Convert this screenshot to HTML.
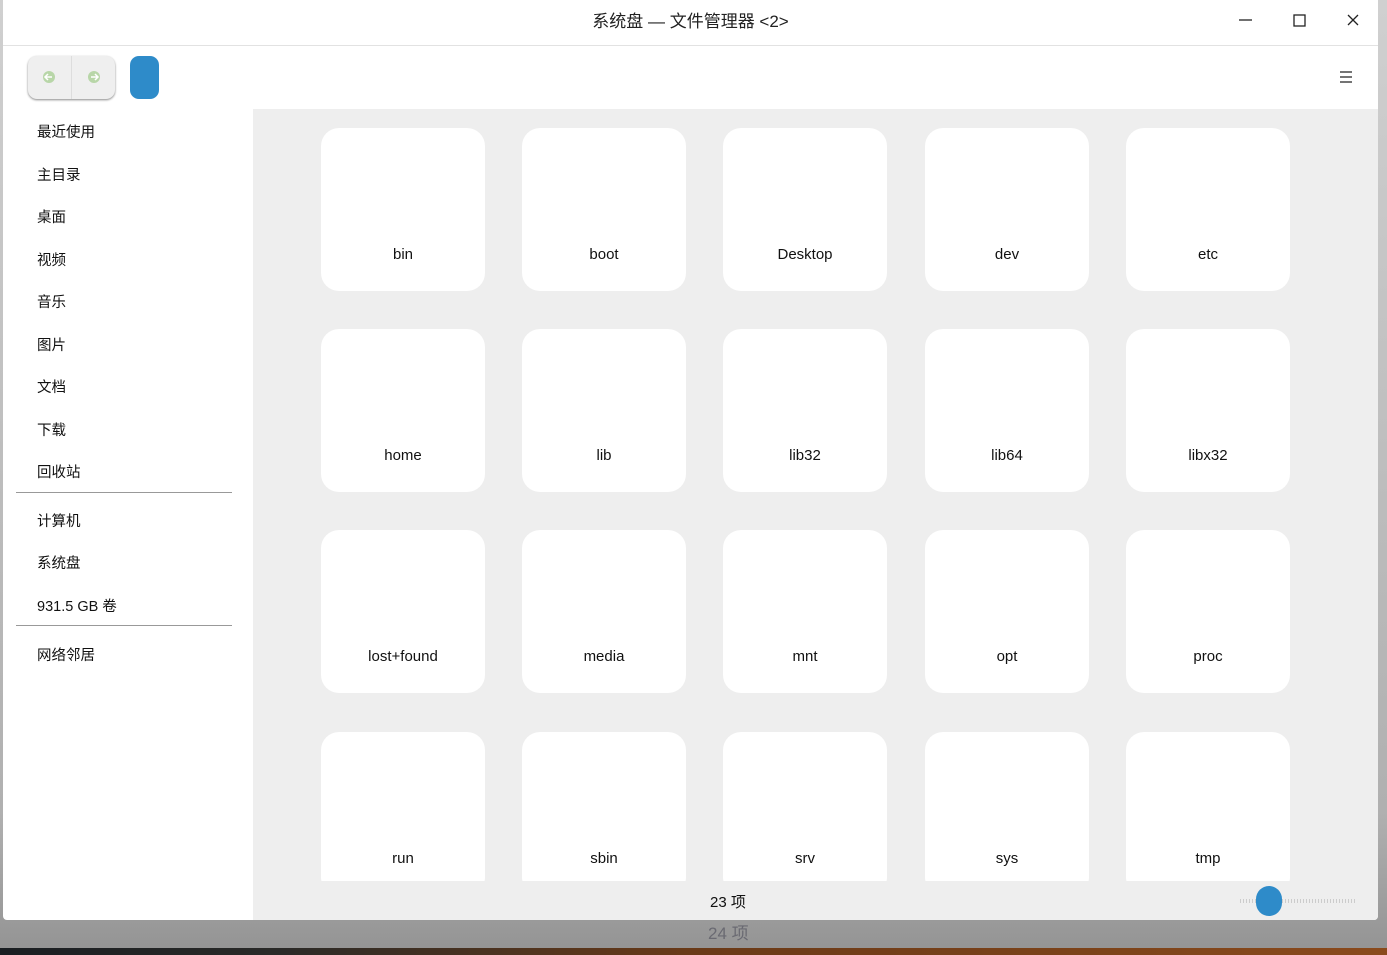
<!DOCTYPE html><html><head><meta charset="utf-8"><style>
*{margin:0;padding:0;box-sizing:border-box}
body{width:1387px;height:955px;overflow:hidden;background:linear-gradient(#d0d0d0,#b0b0b0 85%,#959595 99%);font-family:"Liberation Sans","Noto Sans CJK SC",sans-serif;position:relative}
.win{position:absolute;left:3px;top:0;width:1375px;height:920px;background:#fff;border-radius:0 0 4px 4px;overflow:hidden}
.title{position:absolute;top:0;left:0;right:0;height:46px;border-bottom:1px solid #e2e2e2;text-align:center;line-height:44px;font-size:17px;color:#222}
.side div{position:absolute;left:34px;font-size:14.5px;color:#111}
.sep{position:absolute;left:13px;width:216px;height:1px;background:#999}
.content{position:absolute;left:250px;top:109px;right:0;bottom:0;background:#eeeeee}
.tile{position:absolute;width:164px;height:163px;background:#fff;border-radius:18px;text-align:center;font-size:15px;color:#111;padding-top:118px}
</style></head><body>
<div style="position:absolute;left:0;top:948px;width:1387px;height:7px;background:linear-gradient(90deg,#1a1e22 0,#2a2a28 20%,#6a3a18 50%,#8a4a1c 100%)"></div>
<div class="win">
<div class="title">系统盘 — 文件管理器 &lt;2&gt;</div>
<svg style="position:absolute;left:1230px;top:12px" width="130" height="20"><line x1="6" y1="8" x2="19" y2="8" stroke="#222" stroke-width="1.3"/><rect x="61" y="3" width="11" height="11" fill="none" stroke="#222" stroke-width="1.3"/><path d="M115 3l10 10M125 3l-10 10" stroke="#222" stroke-width="1.3"/></svg>
<div style="position:absolute;left:25px;top:56px;width:87px;height:43px;background:#efefef;border-radius:9px;box-shadow:0 1px 2px #888"><div style="position:absolute;left:43px;top:0;width:1px;height:43px;background:#ddd"></div>
<svg width="87" height="43"><circle cx="21" cy="21" r="6" fill="#b8d6a8"/><path d="M24 21h-6m2-3l-3 3 3 3" stroke="#fff" stroke-width="1.5" fill="none"/><circle cx="66" cy="21" r="6" fill="#b8d6a8"/><path d="M63 21h6m-2-3l3 3-3 3" stroke="#fff" stroke-width="1.5" fill="none"/></svg></div>
<div style="position:absolute;left:127px;top:56px;width:29px;height:43px;background:#2e8bc9;border-radius:9px"></div>
<svg style="position:absolute;left:1336px;top:70px" width="14" height="14"><path d="M1 2h12M1 7h12M1 12h12" stroke="#222" stroke-width="1.3"/></svg>
<div class="side">
<div style="top:121px">最近使用</div><div style="top:164px">主目录</div><div style="top:206px">桌面</div><div style="top:249px">视频</div><div style="top:291px">音乐</div><div style="top:334px">图片</div><div style="top:376px">文档</div><div style="top:419px">下载</div><div style="top:461px">回收站</div>
<div style="top:510px">计算机</div><div style="top:552px">系统盘</div><div style="top:595px">931.5 GB 卷</div><div style="top:644px">网络邻居</div>
</div>
<div class="sep" style="top:492px"></div><div class="sep" style="top:625px"></div>
<div class="content">
<div style="position:absolute;left:0;right:0;top:0;height:772px;overflow:hidden">
<div class="tile" style="left:68px;top:19px">bin</div><div class="tile" style="left:269px;top:19px">boot</div><div class="tile" style="left:470px;top:19px">Desktop</div><div class="tile" style="left:672px;top:19px">dev</div><div class="tile" style="left:873px;top:19px">etc</div>
<div class="tile" style="left:68px;top:220px">home</div><div class="tile" style="left:269px;top:220px">lib</div><div class="tile" style="left:470px;top:220px">lib32</div><div class="tile" style="left:672px;top:220px">lib64</div><div class="tile" style="left:873px;top:220px">libx32</div>
<div class="tile" style="left:68px;top:421px">lost+found</div><div class="tile" style="left:269px;top:421px">media</div><div class="tile" style="left:470px;top:421px">mnt</div><div class="tile" style="left:672px;top:421px">opt</div><div class="tile" style="left:873px;top:421px">proc</div>
<div class="tile" style="left:68px;top:623px">run</div><div class="tile" style="left:269px;top:623px">sbin</div><div class="tile" style="left:470px;top:623px">srv</div><div class="tile" style="left:672px;top:623px">sys</div><div class="tile" style="left:873px;top:623px">tmp</div>
</div>
<div style="position:absolute;left:457px;top:782px;font-size:15px;color:#111">23 项</div>
<div style="position:absolute;left:987px;top:790px;width:115px;height:4px;background:repeating-linear-gradient(90deg,#ccc 0 1px,transparent 1px 3px)"></div>
<div style="position:absolute;left:1003px;top:777px;width:26px;height:30px;background:#2e8bc9;border-radius:13px"></div>
</div>
</div>
<div style="position:absolute;left:708px;top:919px;font-size:17px;color:#6a6a72">24 项</div>
</body></html>
